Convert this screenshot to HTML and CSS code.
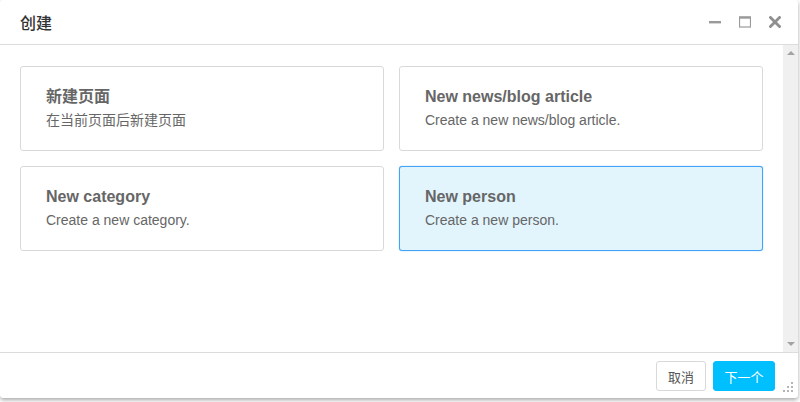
FILE: index.html
```html
<!DOCTYPE html>
<html lang="zh">
<head>
<meta charset="utf-8">
<title>创建</title>
<link rel="stylesheet" href="styles.css">
</head>
<body>
<div class="dialog">
  <header class="dlg-head">
    <h1 class="dlg-title">创建</h1>
    <div class="ctrls">
      <svg class="ctrl" width="12" height="12" viewBox="0 0 12 12"><rect x="0" y="5" width="12" height="2.4" fill="#9a9a9a"/></svg>
      <svg class="ctrl" width="12" height="12" viewBox="0 0 12 12"><rect x="0.5" y="1" width="11" height="10" fill="none" stroke="#9a9a9a" stroke-width="1.2"/><rect x="0" y="0.5" width="12" height="2.2" fill="#9a9a9a"/></svg>
      <svg class="ctrl" width="12" height="12" viewBox="0 0 12 12"><path d="M1.5 1.5 L10.5 10.5 M10.5 1.5 L1.5 10.5" stroke="#8f8f8f" stroke-width="2.8" stroke-linecap="square"/></svg>
    </div>
  </header>
  <div class="dlg-body">
    <div class="content">
      <div class="grid">
        <div class="card">
          <div class="card-title">新建页面</div>
          <div class="card-desc">在当前页面后新建页面</div>
        </div>
        <div class="card">
          <div class="card-title">New news/blog article</div>
          <div class="card-desc">Create a new news/blog article.</div>
        </div>
        <div class="card">
          <div class="card-title">New category</div>
          <div class="card-desc">Create a new category.</div>
        </div>
        <div class="card selected">
          <div class="card-title">New person</div>
          <div class="card-desc">Create a new person.</div>
        </div>
      </div>
    </div>
    <div class="scrollbar">
      <span class="arrow up"></span>
      <span class="arrow down"></span>
    </div>
  </div>
  <footer class="dlg-foot">
    <button class="btn cancel">取消</button>
    <button class="btn primary">下一个</button>
    <svg class="grip" width="12" height="12" viewBox="0 0 12 12">
      <rect x="8" y="0" width="2" height="2" fill="#b5b5b5"/>
      <rect x="4" y="4" width="2" height="2" fill="#b5b5b5"/>
      <rect x="8" y="4" width="2" height="2" fill="#b5b5b5"/>
      <rect x="0" y="8" width="2" height="2" fill="#b5b5b5"/>
      <rect x="4" y="8" width="2" height="2" fill="#b5b5b5"/>
      <rect x="8" y="8" width="2" height="2" fill="#b5b5b5"/>
    </svg>
  </footer>
</div>
</body>
</html>
```

FILE: styles.css
```css
* { box-sizing: border-box; }
html, body {
  margin: 0;
  padding: 0;
  background: #ffffff;
}
body {
  width: 800px;
  height: 402px;
  font-family: "Liberation Sans", Arial, "Noto Sans CJK SC", sans-serif;
  color: #666;
}
.dialog {
  width: 798px;
  height: 398px;
  background: #fff;
  border-radius: 3px;
  box-shadow: 0 2px 4px rgba(0,0,0,0.35);
  display: flex;
  flex-direction: column;
  overflow: hidden;
}
.dlg-head {
  height: 45px;
  flex: none;
  border-bottom: 1px solid #dcdcdc;
  display: flex;
  align-items: center;
  justify-content: space-between;
  padding: 0 17px 0 20px;
}
.dlg-title {
  margin: 0;
  font-size: 16px;
  font-weight: 500;
  color: #333;
  font-family: "Noto Sans CJK SC", sans-serif;
}
.ctrls {
  display: flex;
  gap: 18px;
  align-items: center;
}
.ctrl { display: block; }
.dlg-body {
  flex: 1;
  display: flex;
  min-height: 0;
}
.content {
  flex: 1;
  padding: 21px 20px 0 20px;
}
.grid {
  display: grid;
  grid-template-columns: 1fr 1fr;
  column-gap: 15px;
  row-gap: 15px;
}
.card {
  height: 85px;
  border: 1px solid #d9d9d9;
  border-radius: 3px;
  padding: 19px 25px 0 25px;
}
.card.selected {
  background: #e2f5fd;
  border-color: #42a2f7;
  box-shadow: 0 0 1px #42a2f7;
}
.card-title {
  font-size: 16px;
  font-weight: bold;
  color: #666;
  line-height: 22px;
}
.card-desc {
  font-size: 14px;
  color: #666;
  line-height: 22px;
  margin-top: 1px;
}
.scrollbar {
  width: 15px;
  flex: none;
  background: #f0f0f0;
  display: flex;
  flex-direction: column;
  justify-content: space-between;
  align-items: center;
  padding: 6px 0;
}
.arrow {
  width: 0;
  height: 0;
  border-left: 4px solid transparent;
  border-right: 4px solid transparent;
}
.arrow.up { border-bottom: 4px solid #a3a3a3; }
.arrow.down { border-top: 4px solid #a3a3a3; }
.dlg-foot {
  height: 46px;
  flex: none;
  border-top: 1px solid #dcdcdc;
  display: flex;
  justify-content: flex-end;
  align-items: flex-start;
  gap: 7px;
  padding: 8px 23px 0 0;
  position: relative;
}
.btn {
  height: 30px;
  padding: 0;
  font-size: 13px;
  font-family: "Noto Sans CJK SC", sans-serif;
  color: #555;
  background: #fff;
  border: 1px solid #d9d9d9;
  border-radius: 3px;
}
.btn.cancel { width: 50px; }
.btn.primary {
  width: 62px;
  background: #00bfff;
  border-color: #00bfff;
  color: #fff;
}
.grip {
  position: absolute;
  right: 3px;
  bottom: 4px;
}
```
